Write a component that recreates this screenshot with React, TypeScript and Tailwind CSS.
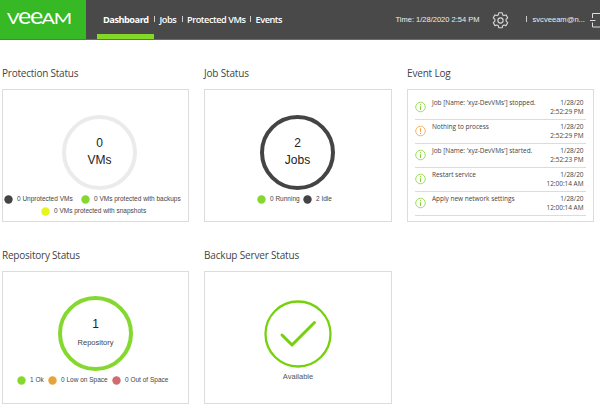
import React from "react";

const sans = "font-['Open_Sans','Noto_Sans',sans-serif]";
const arial = "font-['Liberation_Sans',Arial,sans-serif]";

function Logo() {
  return (
    <svg width="86" height="40" viewBox="0 0 86 40" fill="#fff" className="block font-['Lato',sans-serif]">
      <text x="7" y="24.3" fontSize="15.2" textLength="12.5" lengthAdjust="spacingAndGlyphs">V</text>
      <text x="18" y="24.2" fontSize="22.5" textLength="13.2" lengthAdjust="spacingAndGlyphs">e</text>
      <text x="30" y="24.2" fontSize="22.5" textLength="13.2" lengthAdjust="spacingAndGlyphs">e</text>
      <text x="41.5" y="24.3" fontSize="15.2" textLength="13.5" lengthAdjust="spacingAndGlyphs">A</text>
      <text x="53.8" y="24.3" fontSize="15.2" textLength="18.4" lengthAdjust="spacingAndGlyphs">M</text>
    </svg>
  );
}

function Header() {
  return (
    <header className="flex h-10 w-full overflow-hidden border-b border-[#6b6b6b] bg-[#494949] text-white">
      <div className="h-10 w-[86px] shrink-0 bg-[#37b825]"><Logo /></div>
      <nav className={`flex w-[309.5px] shrink-0 pl-[11px] text-[9.2px] leading-[39px] font-semibold tracking-[-0.45px] whitespace-nowrap ${sans}`}>
        <div className="h-10 w-[57px] border-b-[6px] border-[#84d828] pl-[6px] font-bold tracking-[-0.48px]">Dashboard</div>
        <Bar className="mt-4" />
        <span className="ml-[4.5px] w-[17px]">Jobs</span>
        <Bar className="mt-4 ml-[5px]" />
        <span className="ml-[4.5px] w-[58px]">Protected VMs</span>
        <Bar className="mt-4 ml-[4.5px]" />
        <span className="ml-[5px]">Events</span>
      </nav>
      <div className={`flex shrink-0 text-[7.5px] leading-10 whitespace-nowrap text-[#eee] ${arial}`}>
        <span className="w-[96px]">Time: 1/28/2020 2:54 PM</span>
        <svg width="17" height="17" viewBox="0 0 17 17" fill="none" stroke="#d8d8d8" strokeWidth="1.1" strokeLinejoin="round" className="mt-3 shrink-0">
          <path d="M6.8 .8h3.4l.5 2.1 1.2.7 2.1-.7 1.7 2.9-1.6 1.5v1.9l1.6 1.5-1.7 2.9-2.1-.6-1.2.7-.5 2.1H6.8l-.5-2.1-1.2-.7-2.1.6-1.7-2.9 1.6-1.5V7.3L1.3 5.8 3 2.9l2.1.7 1.2-.7z" />
          <circle cx="8.5" cy="8.5" r="2.6" />
        </svg>
        <Bar className="mt-4 ml-[17px]" />
        <span className="ml-[6px] w-[57px] text-[7.6px]">svcveeam@n...</span>
        <svg width="10" height="16" viewBox="0 0 10 16" fill="none" stroke="#ddd" className="mt-3 shrink-0">
          <path d="M10 1.5H2.5v4.5M2.5 10.5v4.5H10M0 8.5h5.5" />
        </svg>
      </div>
    </header>
  );
}

function Bar({ className }: { className: string }) {
  return <i className={`h-[6px] w-px shrink-0 bg-[#ccc] ${className}`} />;
}

function Panel({ title, children, tight }: { title: string; children: React.ReactNode; tight?: boolean }) {
  return (
    <section>
      <h2 className={`h-[23px] text-[10px] leading-[14px] whitespace-nowrap text-[#444] ${tight ? "tracking-[-0.22px]" : "tracking-[-0.17px]"} ${sans}`}>{title}</h2>
      <div className="flex h-[133px] flex-col border border-[#dcdcdc] bg-white">{children}</div>
    </section>
  );
}

function Legend({ color, label, className = "" }: { color: string; label: string; className?: string }) {
  return (
    <div className={`flex h-3 items-center gap-[4px] text-[6.5px] leading-3 whitespace-nowrap text-[#444] ${arial} ${className}`}>
      <svg width="9" height="9" viewBox="0 0 9 9" className={`shrink-0 ${color}`}>
        <circle cx="4.5" cy="4.5" r="4.2" />
      </svg>
      <span>{label}</span>
    </div>
  );
}

function Ring({ value, label, small, className }: { value: string; label: string; small?: boolean; className: string }) {
  return (
    <div className={`flex size-[75px] shrink-0 flex-col items-center rounded-full border-4 text-[#222] ${arial} ${className}`}>
      <span className="mt-[17px] h-[17px] text-[12px] leading-[14px]">{value}</span>
      <span className={small ? "text-[7.5px] leading-[17px] text-[#444]" : "text-[12px] leading-[14px]"}>{label}</span>
    </div>
  );
}

const events = [
  { text: "Job [Name: 'xyz-DevVMs'] stopped.", time: "2:52:29 PM" },
  { text: "Nothing to process", time: "2:52:29 PM", warn: true },
  { text: "Job [Name: 'xyz-DevVMs'] started.", time: "2:52:23 PM" },
  { text: "Restart service", time: "12:00:14 AM" },
  { text: "Apply new network settings", time: "12:00:14 AM" },
];

export default function App() {
  return (
    <div className="h-[411px] w-[600px] overflow-hidden bg-white">
      <Header />
      <main className="grid grid-cols-[187px_188px_187px] grid-rows-[156px_156px] gap-x-[15px] gap-y-[26px] pt-[26px] pl-[2px]">
        <Panel title="Protection Status" tight>
          <Ring value="0" label="VMs" className="mt-[25px] ml-[59px] border-[#ebebeb]" />
          <div className="mt-[3px] flex pl-px">
            <Legend color="fill-[#444]" label="0 Unprotected VMs" className="w-[77px]" />
            <Legend color="fill-[#84d82f]" label="0 VMs protected with backups" />
          </div>
          <Legend color="fill-[#e5f51d]" label="0 VMs protected with snapshots" className="pl-[38px]" />
        </Panel>
        <Panel title="Job Status">
          <Ring value="2" label="Jobs" className="mt-[25px] ml-[55px] border-[#444]" />
          <div className="mt-[3px] flex pl-[52px]">
            <Legend color="fill-[#84d82f]" label="0 Running" className="w-[46px]" />
            <Legend color="fill-[#444]" label="2 Idle" />
          </div>
        </Panel>
        <Panel title="Event Log">
          <ul className={`mx-[7px] mt-[6px] text-[6.5px] leading-[9px] tracking-[-0.03px] text-[#444] ${sans}`}>
            {events.map((e, i) => (
              <li key={i} className="flex h-6 border-b border-[#dcdcdc] whitespace-nowrap">
                <svg width="17" height="12" viewBox="0 0 17 12" fill="none" stroke={e.warn ? "#f2a344" : "#84d82f"} className="mt-[5px] shrink-0">
                  <circle cx="5.5" cy="6" r="4.8" strokeWidth=".8" />
                  <path d={e.warn ? "M5.5 3.2v3.6m0 1v1.2" : "M5.5 3.2v1.1m0 1v3.7"} />
                </svg>
                <span className="flex-1 pt-[2px]">{e.text}</span>
                <span className="pt-[2px] pr-[2.5px] text-right">1/28/20<br />{e.time}</span>
              </li>
            ))}
          </ul>
        </Panel>
        <Panel title="Repository Status" tight>
          <Ring value="1" label="Repository" small className="mt-[24px] ml-[55px] border-[#84d82f]" />
          <div className="mt-[3px] flex pl-[14px]">
            <Legend color="fill-[#84d82f]" label="1 Ok" className="w-[31px]" />
            <Legend color="fill-[#e8a336]" label="0 Low on Space" className="w-[64px]" />
            <Legend color="fill-[#d36b6e]" label="0 Out of Space" />
          </div>
        </Panel>
        <Panel title="Backup Server Status">
          <svg width="68" height="68" viewBox="0 0 68 68" fill="none" stroke="#75d10c" className="mt-[28px] ml-[59px] shrink-0">
            <circle cx="34" cy="34" r="32.5" strokeWidth="2.3" />
            <path d="M18 35l10 10L50.5 22.5" strokeWidth="3" strokeLinecap="round" strokeLinejoin="round" />
          </svg>
          <span className={`mt-[3px] text-center text-[7.5px] leading-3 text-[#555] ${arial}`}>Available</span>
        </Panel>
      </main>
    </div>
  );
}
